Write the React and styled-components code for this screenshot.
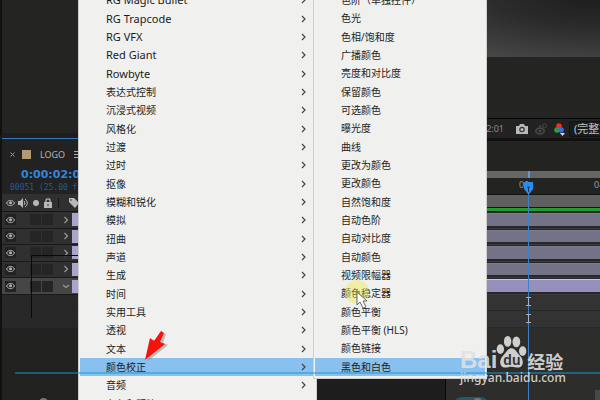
import React from 'react'
import styled, { createGlobalStyle } from 'styled-components'

const effectGroups = [
  'RG Magic Bullet', 'RG Trapcode', 'RG VFX', 'Red Giant', 'Rowbyte',
  '表达式控制', '沉浸式视频', '风格化', '过渡', '过时', '抠像', '模糊和锐化',
  '模拟', '扭曲', '声道', '生成', '时间', '实用工具', '透视', '文本',
  '颜色校正', '音频', '杂色和颗粒',
]

const colorEffects = [
  '色阶（单独控件）', '色光', '色相/饱和度', '广播颜色', '亮度和对比度',
  '保留颜色', '可选颜色', '曝光度', '曲线', '更改为颜色', '更改颜色',
  '自然饱和度', '自动色阶', '自动对比度', '自动颜色', '视频限幅器',
  '颜色稳定器', '颜色平衡', '颜色平衡 (HLS)', '颜色链接', '黑色和白色',
]

const layers = ['closed', 'closed', 'closed', 'closed', 'open']

const isLatin = (text) => /^[A-Za-z ]+$/.test(text)

const App = () => (
  <Page>
    <GlobalStyle />
    <Viewer>
      <Project />
      <Composition>
        <Canvas />
        <Pasteboard />
        <ViewerBar>
          <ViewerTime>0:00:02:01</ViewerTime>
          <IconButton aria-label="Snapshot"><CameraIcon /></IconButton>
          <IconButton aria-label="Show snapshot"><GhostIcon /></IconButton>
          <IconButton aria-label="Channels"><ChannelsIcon /></IconButton>
          <Resolution aria-label="Resolution" defaultValue="full">
            <option value="full">(完整)</option>
          </Resolution>
        </ViewerBar>
      </Composition>
    </Viewer>

    <Timeline>
      <TimelineHead>
        <LayerHead>
          <TabRow>
            <IconButton aria-label="Close"><CloseIcon /></IconButton>
            <Swatch />
            <Tab>LOGO</Tab>
            <IconButton aria-label="Panel menu"><LinesIcon /></IconButton>
          </TabRow>
          <Timecode>0:00:02:01</Timecode>
          <Frames>00051 (25.00 fps)</Frames>
          <Switches>
            <EyeIcon />
            <SpeakerIcon />
            <Dot />
            <LockIcon />
            <Divider />
            <TagIcon />
          </Switches>
        </LayerHead>
        <RulerHead>
          <Navigator />
          <Ruler>
            <Tick>00s</Tick>
            <Tick>04s</Tick>
          </Ruler>
          <WorkArea />
          <Cached />
        </RulerHead>
      </TimelineHead>
      <Tracks>
        {layers.map((state, key) => (
          <Track key={key}>
            <LayerCell $selected={state === 'open'}>
              <EyeBox aria-label="Visible"><EyeIcon /></EyeBox>
              <Cells><Cell /><Cell /></Cells>
              <Twirl aria-label="Expand"><Chevron open={state === 'open'} /></Twirl>
              <Label />
            </LayerCell>
            <BarCell><Bar $selected={state === 'open'} /></BarCell>
          </Track>
        ))}
        <Track><LayerCell $empty /><BarCell $empty /></Track>
        <Track><LayerCell $empty /><BarCell $empty /></Track>
      </Tracks>
      <Playhead>
        <svg width="11" height="230" viewBox="0 0 11 230">
          <path d="M5 0h2v7H5z" fill="#5c9bd8" />
          <path d="M1 11h9v7l-4 5h-1l-4-5z" fill="#2d8ceb" />
          <path d="M4 16h3M5.500 16v5" stroke="#173a63" fill="none" />
          <path d="M5.500 23v207" stroke="#3d80c8" />
          <path d="M3 126.500h5M3 134.500h5M5.500 127v8M3 143.500h5M3 151.500h5M5.500 144v8" stroke="#a7b2c2" />
        </svg>
      </Playhead>
      <Connector>
        <svg width="48" height="64" viewBox="0 0 48 64">
          <path d="M48 .5H.5V63" stroke="#090909" fill="none" />
        </svg>
      </Connector>
    </Timeline>

    <Menu $left={78} $width={239} role="menu">
      <MenuList $rows={422}>
        {effectGroups.map((name) => (
          <MenuItem key={name} role="menuitem" $latin={isLatin(name)} $active={name === '颜色校正'}>
            <span>{name}</span>
            <Arrow />
          </MenuItem>
        ))}
      </MenuList>
    </Menu>
    <Menu $left={313} $width={174} role="menu">
      <MenuList $rows={385}>
        {colorEffects.map((name) => (
          <MenuItem key={name} role="menuitem" $active={name === '黑色和白色'}>
            <span>{name}</span>
          </MenuItem>
        ))}
      </MenuList>
    </Menu>

    <CaptionPanel />
    <CaptionBlob $left={452} $width={38} />
    <CaptionDot $left={39} />
    <CaptionDot $left={473} />
    <CaptionEdge />
    <ProgressLine />

    <RedArrow>
      <svg width="30" height="40" viewBox="0 0 30 40">
        <path d="M2 30L7 8l4 3 7-9 2 1-3 9 5 2z" fill="#555" opacity=".35" transform="translate(3 1)" />
        <path d="M2 30L7 8l4 3 7-10 3 2-4 9 5 2z" fill="#f5130d" />
      </svg>
    </RedArrow>
    <Pointer>
      <svg width="32" height="30" viewBox="0 0 32 30">
        <circle cx="12" cy="12" r="12" fill="#eee83c" opacity=".4" />
        <path d="M12 12v13l3-3 3 6 3-1-3-6h4z" fill="#fff" stroke="#666" />
      </svg>
    </Pointer>
    <Watermark>
      <Brand>
        <span>Bai</span>
        <Paw>
          <svg width="31" height="36" viewBox="0 0 32 36">
            <ellipse cx="4.500" cy="14" rx="3.800" ry="5" />
            <ellipse cx="12" cy="6" rx="3.800" ry="5.500" />
            <ellipse cx="21" cy="6.500" rx="4" ry="5.500" />
            <ellipse cx="27.500" cy="16" rx="3.800" ry="5" />
            <path d="M16 13c4 0 5 4 9 8s4 13-4 12c-4-1-6-1-10 0-8 1-8-8-4-12s5-8 9-8z" />
          </svg>
          <Du>du</Du>
        </Paw>
        <BrandName>经验</BrandName>
      </Brand>
      <Site href="#site">jingyan.baidu.com</Site>
    </Watermark>
  </Page>
)

const Arrow = () => (
  <svg width="6" height="8" viewBox="0 0 6 8">
    <path d="M1 1l3 3-3 3" fill="none" stroke="#444" strokeWidth="1.200" />
  </svg>
)

const Chevron = ({ open }) => (
  <svg width="8" height="8" viewBox="0 0 8 8">
    <path d={open ? 'M1 3l3 2.500 3-2.500' : 'M2.500 1l3 3-3 3'} fill="none" stroke="#999" strokeWidth="1.200" />
  </svg>
)

const EyeIcon = () => (
  <svg width="9" height="8" viewBox="0 0 9 8">
    <path d="M.5 4C2.500.5 6.500.5 8.500 4 6.500 7.500 2.500 7.500.5 4z" fill="none" stroke="#b8b8b8" />
    <circle cx="4.500" cy="3.700" r="1.500" fill="#b8b8b8" />
  </svg>
)

const SpeakerIcon = () => (
  <svg width="10" height="10" viewBox="0 0 10 10">
    <path d="M0 3h2l3-3v10L2 7H0z" fill="#b8b8b8" />
    <path d="M6 3c1 1 1 3 0 4M7 1c3 2 3 6 0 8" fill="none" stroke="#b8b8b8" />
  </svg>
)

const LockIcon = () => (
  <svg width="8" height="10" viewBox="0 0 8 10">
    <path d="M0 4h8v6H0z" fill="#b8b8b8" />
    <path d="M2 4V2.500C2 .3 6 .3 6 2.500V4" fill="none" stroke="#b8b8b8" strokeWidth="1.300" />
    <path d="M4 6v2" stroke="#333" />
  </svg>
)

const TagIcon = () => (
  <svg width="10" height="10" viewBox="0 0 10 10">
    <path d="M0 0h5l5 5-4 5-6-6z" fill="#b8b8b8" />
    <circle cx="2" cy="2" r=".8" fill="#333" />
  </svg>
)

const CloseIcon = () => (
  <svg width="5" height="5" viewBox="0 0 5 5">
    <path d="M.5.5l4 4M4.500.5l-4 4" stroke="#999" />
  </svg>
)

const LinesIcon = () => (
  <svg width="8" height="7" viewBox="0 0 8 7">
    <path d="M0 .5h8M0 3.500h8M0 6.500h8" stroke="#aaa" />
  </svg>
)

const CameraIcon = () => (
  <svg width="12" height="10" viewBox="0 0 12 10">
    <path d="M0 2h3l1-2h4l1 2h3v8H0z" fill="#b9b9b9" />
    <circle cx="6" cy="5.500" r="2.200" fill="none" stroke="#333" strokeWidth="1.200" />
  </svg>
)

const GhostIcon = () => (
  <svg width="12" height="12" viewBox="0 0 12 12">
    <path d="M.5 8c2-4 7-4 9 0-2 4-7 4-9 0z" fill="none" stroke="#494949" strokeWidth="1.400" />
    <circle cx="5" cy="8" r="1.500" fill="#494949" />
    <circle cx="9.500" cy="3" r="2" fill="none" stroke="#494949" />
    <circle cx="5" cy="3" r="1" fill="#494949" />
  </svg>
)

const ChannelsIcon = () => (
  <svg width="11" height="14" viewBox="0 0 11 14">
    <circle cx="5" cy="4" r="2.800" fill="#ef2b24" />
    <circle cx="3" cy="8" r="2.800" fill="#23a52c" />
    <circle cx="7" cy="8" r="2.800" fill="#3c6bea" />
    <path d="M6 11h5l-2.500 3z" fill="#ddd" />
  </svg>
)

const GlobalStyle = createGlobalStyle`
  * {
    box-sizing: border-box;
  }
  body {
    margin: 0;
    background: #1e1e1e;
    font-family: "Noto Sans", "Noto Sans CJK SC", sans-serif;
  }
  button, select {
    margin: 0;
    padding: 0;
    border: 0;
    background: none;
    color: inherit;
    font: inherit;
  }
  svg {
    display: block;
    flex: none;
  }
`

const Page = styled.main`
  position: relative;
  display: flex;
  flex-direction: column;
  height: 100vh;
  overflow: hidden;
  color: #aaa;
`

const Viewer = styled.section`
  display: flex;
  flex: none;
  height: 138px;
`

const Project = styled.div`
  flex: none;
  width: 300px;
  background: #242422;
  border-left: 2px solid #111;
  border-bottom: 5px solid #1e1e1e;
`

const Composition = styled.div`
  display: flex;
  flex: 1;
  flex-direction: column;
  min-width: 0;
`

const Canvas = styled.div`
  height: 57px;
  background: radial-gradient(ellipse 220px 70px at 100% -10%, #1b1b1b, #2c2c2c 50%, #464646 100%);
`

const Pasteboard = styled.div`
  flex: 1;
  background: #242422;
  border-bottom: 1px solid #050505;
`

const ViewerBar = styled.div`
  display: flex;
  align-items: center;
  gap: 7px;
  height: 19px;
  padding-left: 155px;
  background: #222;
`

const ViewerTime = styled.span`
  flex: none;
  width: 49px;
  margin-right: 5px;
  font-size: 9px;
  text-align: right;
  color: #888;
`

const IconButton = styled.button`
  display: flex;
  flex: none;
  align-items: center;
`

const Resolution = styled.select`
  flex: none;
  width: 60px;
  height: 16px;
  margin-left: -3px;
  padding-left: 4px;
  appearance: none;
  border: 1px solid #111;
  border-radius: 2px;
  background: #1b1b1b;
  font-size: 11px;
  line-height: 14px;
  color: #c4c4c4;
`

const Timeline = styled.section`
  position: relative;
  flex: 1;
  background: linear-gradient(90deg, #212120 300px, #2d2d2c 300px);
  border-left: 2px solid #111;
`

const TimelineHead = styled.div`
  display: flex;
  height: 74px;
`

const LayerHead = styled.div`
  display: flex;
  flex: none;
  flex-direction: column;
  width: 298px;
  border-top: 1px solid #3677b8;
  background: #222;
`

const TabRow = styled.div`
  display: flex;
  align-items: center;
  gap: 9px;
  height: 28px;
  padding: 2px 0 0 8px;
`

const Swatch = styled.span`
  width: 9px;
  height: 9px;
  margin-left: -2px;
  background: #b09b75;
`

const Tab = styled.button`
  font-size: 9px;
  color: #b5b5b5;
`

const Timecode = styled.div`
  height: 16px;
  padding-left: 19px;
  font: bold 11px/16px "DejaVu Sans", sans-serif;
  color: #2f86dc;
`

const Frames = styled.div`
  height: 11px;
  padding-left: 8px;
  font: 8px/10px "DejaVu Sans Mono", monospace;
  color: #245a96;
`

const Switches = styled.div`
  display: flex;
  flex: 1;
  align-items: center;
  gap: 3px;
  padding-left: 4px;
  background: #303030;
  border-bottom: 1px solid #151515;
`

const Dot = styled.span`
  width: 6px;
  height: 6px;
  margin: 0 2px;
  border-radius: 50%;
  background: #b8b8b8;
`

const Divider = styled.span`
  width: 1px;
  height: 10px;
  margin: 0 7px 0 3px;
  background: #151515;
`

const RulerHead = styled.div`
  display: flex;
  flex: 1;
  flex-direction: column;
  min-width: 0;
  border-top: 3px solid #111;
  background: #232321;
`

const Navigator = styled.div`
  height: 7px;
  margin-top: 30px;
  background: #666;
`

const Ruler = styled.div`
  display: flex;
  gap: 60px;
  height: 17px;
  padding-left: 219px;
  border-bottom: 1px solid #111;
  overflow: hidden;
`

const Tick = styled.span`
  flex: none;
  width: 15px;
  font-size: 9px;
  line-height: 13px;
  color: #999;
`

const WorkArea = styled.div`
  height: 13px;
  background: #5f5f5f;
  border-bottom: 1px solid #171717;
`

const Cached = styled.div`
  height: 3px;
  background: #229b30;
`

const Tracks = styled.div`
  display: grid;
  grid-template-rows: repeat(7, 1fr);
  height: 116px;
`

const Track = styled.div`
  display: flex;
`

const LayerCell = styled.div`
  display: flex;
  flex: none;
  align-items: center;
  width: 298px;
  padding-left: 3px;
  border-bottom: 1px solid ${props => props.$empty ? '#262626' : '#1a1a1a'};
  background: ${props => {
    if (props.$selected) {
      return '#464646'
    }
    return props.$empty ? '#282828' : '#303030'
  }};
`

const EyeBox = styled.button`
  display: flex;
  align-items: center;
  justify-content: center;
  width: 11px;
  height: 11px;
  background: #222;
`

const Cells = styled.div`
  display: flex;
  gap: 1px;
  padding: 0 7px 0 14px;
`

const Cell = styled.span`
  width: 11px;
  height: 11px;
  background: #252525;
`

const Twirl = styled.button`
  display: flex;
  width: 12px;
  justify-content: center;
`

const Label = styled.span`
  flex: 1;
  height: 13px;
  background: #a9a5cc;
`

const BarCell = styled.div`
  display: flex;
  flex: 1;
  padding: 1px 0 2px;
  background: ${props => props.$empty ? '#333' : '#26262b'};
  border-bottom: 1px solid ${props => props.$empty ? '#292929' : '#3b3b40'};
`

const Bar = styled.div`
  flex: 1;
  background: ${props => props.$selected ? '#9490bb' : '#737286'};
  border-top: 1px solid ${props => props.$selected ? '#cbc8dc' : '#7d7c8e'};
`

const Playhead = styled.div`
  position: absolute;
  top: 33px;
  left: 521px;
`

const Connector = styled.div`
  position: absolute;
  top: 117px;
  left: 29px;
`

const Menu = styled.div`
  position: absolute;
  top: -9px;
  left: ${props => props.$left}px;
  width: ${props => props.$width}px;
  padding: 0 1px 2px;
  background: #f0f0ef;
  border: 1px solid #cfcfcf;
  border-top: 0;
`

const MenuList = styled.div`
  display: grid;
  grid-auto-rows: 1fr;
  height: ${props => props.$rows}px;
`

const MenuItem = styled.button`
  display: flex;
  align-items: center;
  justify-content: space-between;
  min-height: 0;
  padding: 0 8px 0 26px;
  background: ${props => props.$active ? '#88c0ef' : 'transparent'};
  font-size: ${props => props.$latin ? 11 : 10}px;
  line-height: 16px;
  text-align: left;
  white-space: nowrap;
  color: #1c1c1c;
`

const CaptionPanel = styled.div`
  position: absolute;
  top: 379px;
  right: 154px;
  bottom: 0;
  left: 317px;
  background: #1d1d1d;
  border-right: 1px solid #080808;
`

const CaptionBlob = styled.div`
  position: absolute;
  top: 397px;
  left: ${props => props.$left}px;
  width: ${props => props.$width}px;
  height: 20px;
  border-radius: 10px;
  background: #28566a;
`

const CaptionDot = styled.div`
  position: absolute;
  top: 398px;
  left: ${props => props.$left}px;
  width: 9px;
  height: 9px;
  border-radius: 50%;
  background: #777;
`

const CaptionEdge = styled.div`
  position: absolute;
  top: 390px;
  right: 0;
  width: 5px;
  height: 10px;
  background: #484848;
`

const ProgressLine = styled.div`
  position: absolute;
  top: 372px;
  right: 0;
  left: 15px;
  height: 2px;
  background: rgba(30, 150, 200, 0.5);
`

const RedArrow = styled.div`
  position: absolute;
  top: 330px;
  left: 143px;
`

const Pointer = styled.div`
  position: absolute;
  top: 280px;
  left: 345px;
`

const Watermark = styled.div`
  position: absolute;
  top: 335px;
  left: 460px;
  color: rgba(225, 225, 225, 0.9);
`

const Brand = styled.div`
  display: flex;
  align-items: flex-end;
  height: 36px;
  font: bold 24px/22px "Liberation Sans", sans-serif;
`

const Paw = styled.div`
  position: relative;
  margin-left: -1px;
  fill: currentColor;
`

const Du = styled.span`
  position: absolute;
  top: 18px;
  left: 7px;
  font-size: 14px;
  line-height: 14px;
  color: #333;
`

const BrandName = styled.span`
  font: bold 18px/20px "Noto Sans CJK SC", sans-serif;
`

const Site = styled.a`
  display: block;
  font: 500 12px/14px "Noto Sans", sans-serif;
  color: inherit;
  text-decoration: none;
`

export default App
